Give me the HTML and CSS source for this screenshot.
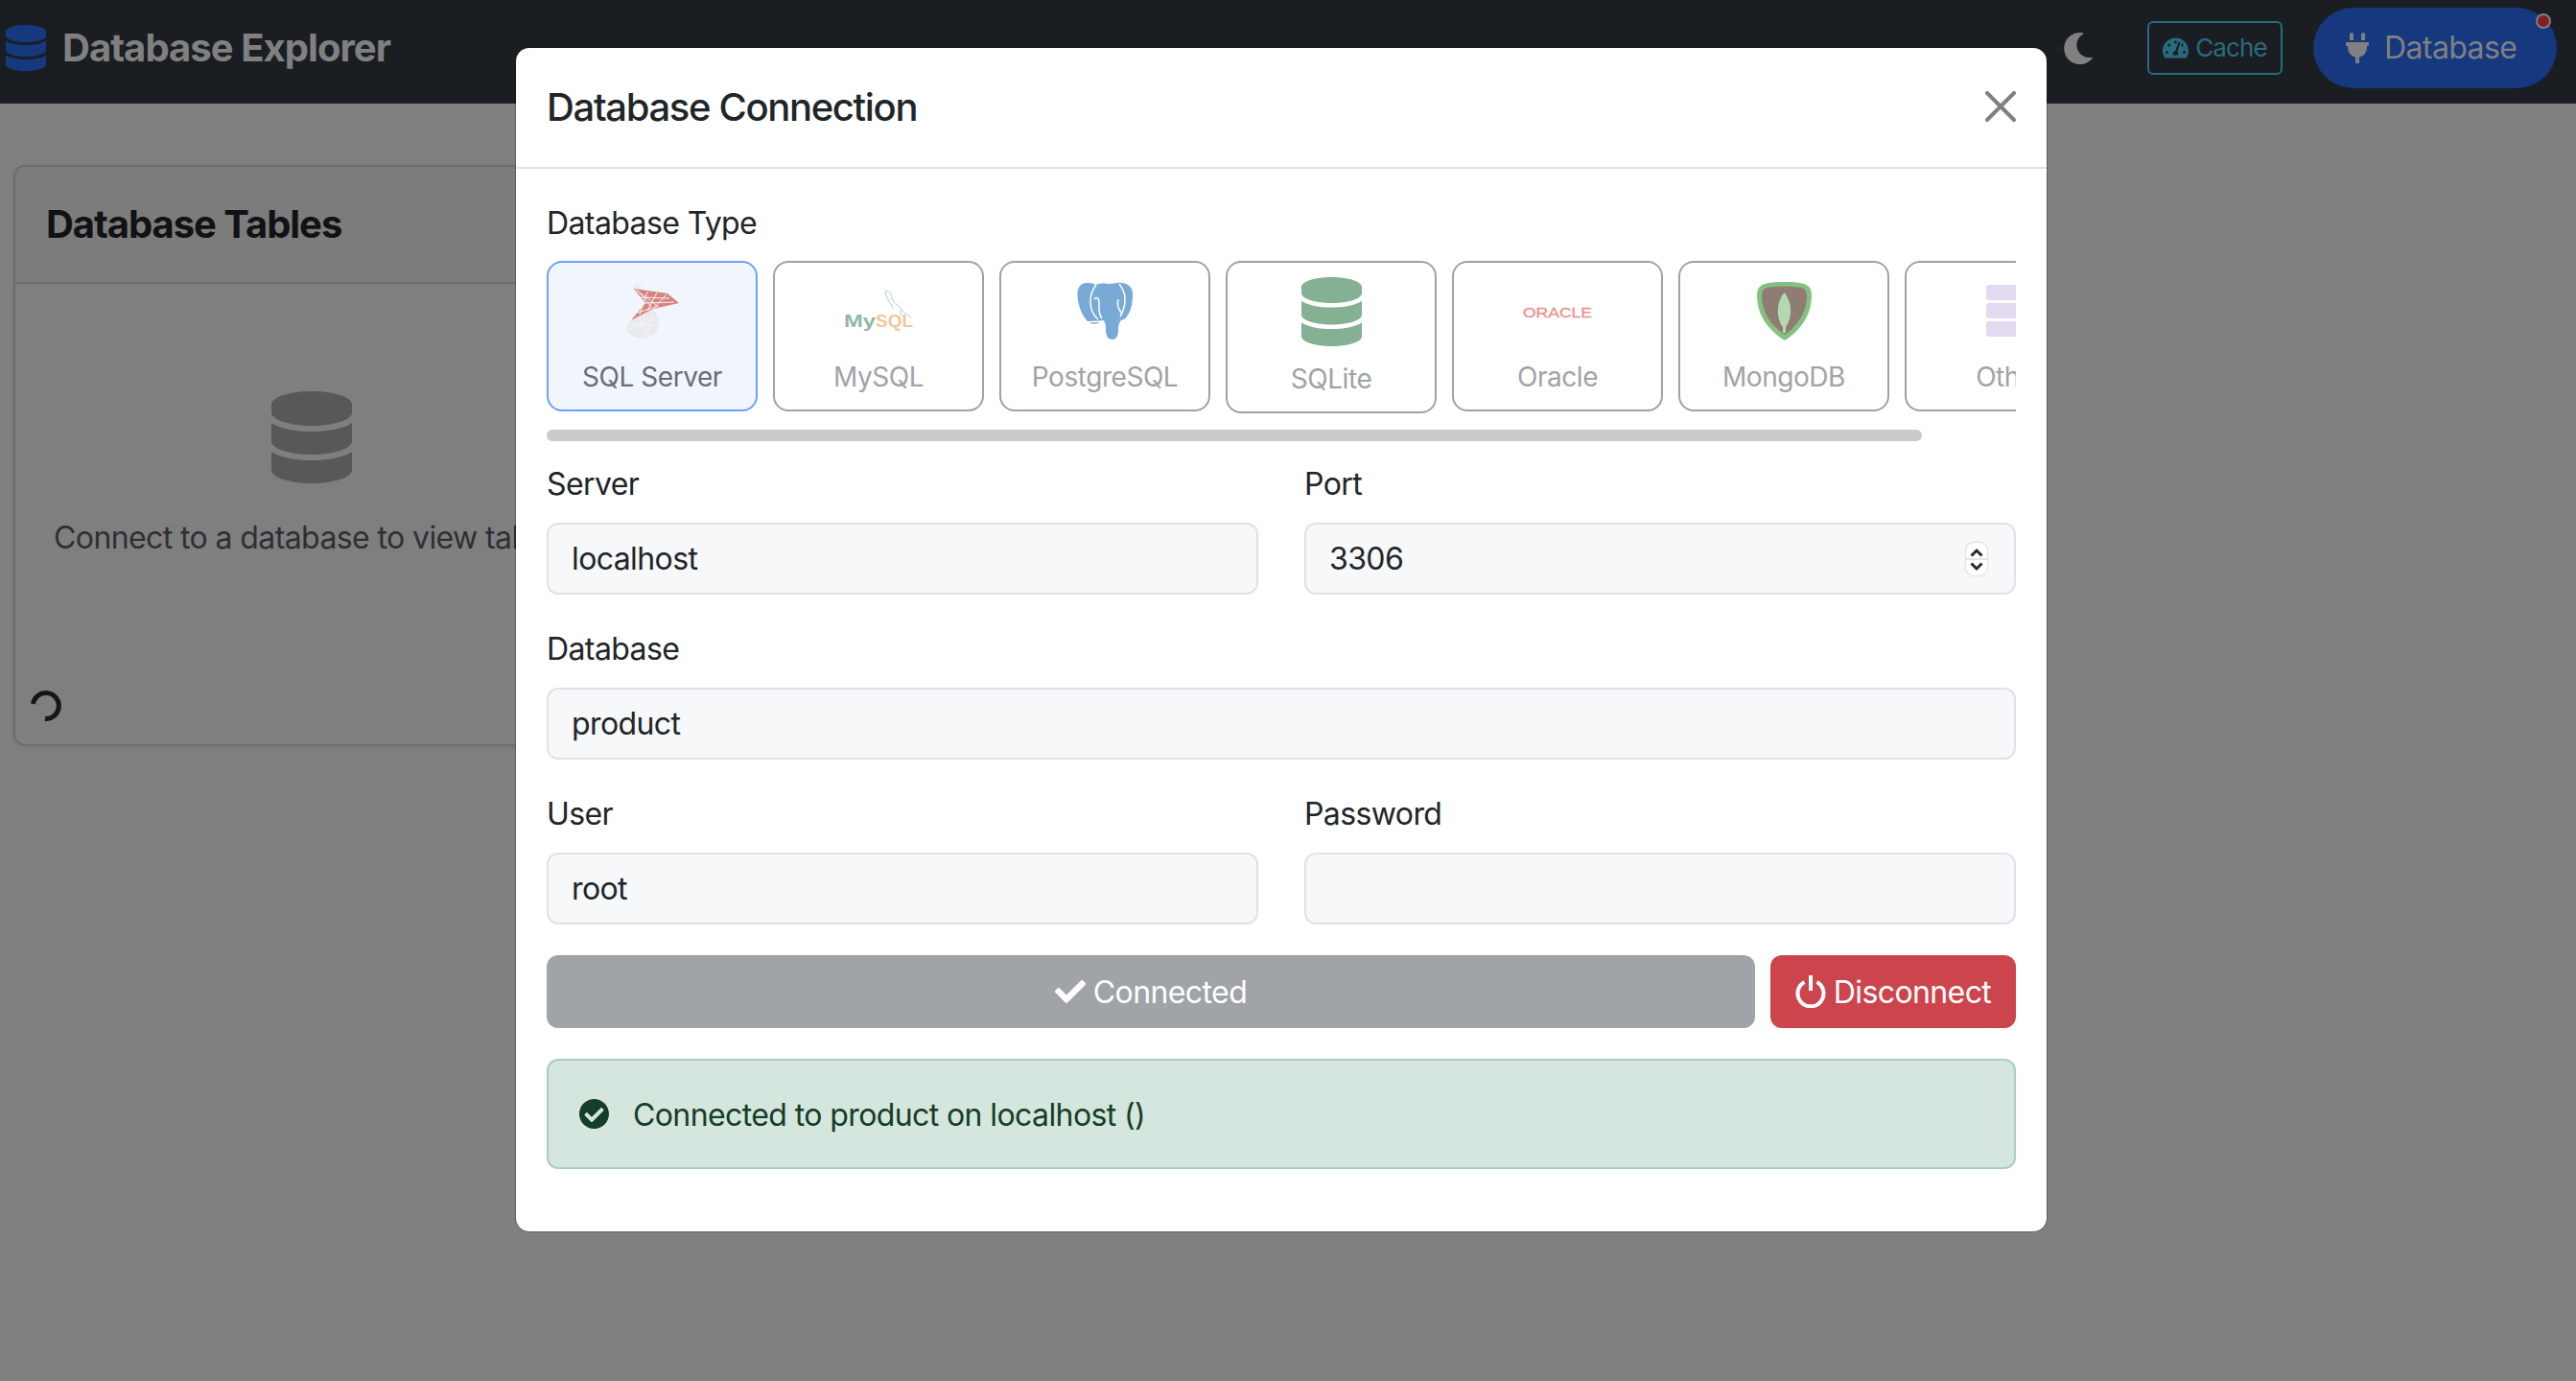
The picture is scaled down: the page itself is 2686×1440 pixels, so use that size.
FILE: index.html
```html
<!DOCTYPE html>
<html lang="en">
<head>
<meta charset="utf-8">
<title>Database Explorer</title>
<link rel="stylesheet" href="styles.css">
</head>
<body>
<nav class="navbar">
  <div class="brand">
    <svg class="brand-icon" viewBox="0 0 448 512"><path fill="currentColor" d="M448 73.143v45.714C448 159.143 347.667 192 224 192S0 159.143 0 118.857V73.143C0 32.857 100.333 0 224 0s224 32.857 224 73.143zM448 176v102.857C448 319.143 347.667 352 224 352S0 319.143 0 278.857V176c48.125 33.143 136.208 48.572 224 48.572S399.874 209.143 448 176zm0 160v102.857C448 479.143 347.667 512 224 512S0 479.143 0 438.857V336c48.125 33.143 136.208 48.572 224 48.572S399.874 369.143 448 336z"/></svg>
    <span>Database Explorer</span>
  </div>
  <div class="nav-actions">
    <svg class="moon" viewBox="27 0 460 512"><path fill="currentColor" d="M283.211 512c78.962 0 151.079-35.925 198.857-94.792 7.068-8.708-.639-21.43-11.562-19.35-124.2 23.654-238.256-71.576-238.256-196.954 0-72.222 38.662-138.635 101.498-174.394 9.686-5.512 7.25-20.197-3.756-22.23A258.156 258.156 0 0 0 283.211 0c-141.309 0-256 114.511-256 256 0 141.309 114.511 256 256 256z"/></svg>
    <button class="cache-btn">
      <svg class="gauge" viewBox="0 32 576 448"><path fill="currentColor" d="M288 32C128.94 32 0 160.94 0 320c0 52.8 14.25 102.26 39.06 144.8 5.61 9.62 16.3 15.2 27.44 15.2h443c11.14 0 21.83-5.58 27.44-15.2C561.75 422.26 576 372.8 576 320c0-159.06-128.94-288-288-288zm0 64c14.71 0 26.58 10.13 30.32 23.65-1.11 2.26-2.64 4.23-3.45 6.67l-9.22 27.67c-5.13 3.49-10.97 6.01-17.64 6.01-17.67 0-32-14.33-32-32S270.33 96 288 96zM96 384c-17.67 0-32-14.33-32-32s14.33-32 32-32 32 14.33 32 32-14.33 32-32 32zm48-160c-17.67 0-32-14.33-32-32s14.33-32 32-32 32 14.33 32 32-14.33 32-32 32zm246.77-72.41l-61.33 184C343.13 347.33 352 364.54 352 384c0 11.72-3.38 22.55-8.88 32H232.88c-5.5-9.45-8.88-20.28-8.88-32 0-33.94 26.5-61.43 59.9-63.59l61.34-184.01c4.17-12.56 17.73-19.45 30.36-15.17 12.57 4.19 19.35 17.79 15.17 30.36zm14.66 57.2l15.52-46.55c3.47-1.29 7.13-2.23 11.05-2.23 17.67 0 32 14.33 32 32s-14.33 32-32 32c-11.38-.01-20.89-6.28-26.57-15.22zM480 384c-17.67 0-32-14.33-32-32s14.33-32 32-32 32 14.33 32 32-14.33 32-32 32z"/></svg>
      <span>Cache</span>
    </button>
    <button class="db-btn">
      <svg class="plug" viewBox="0 0 384 512"><path fill="currentColor" d="M320,32a32,32,0,0,0-64,0v96h64Zm48,128H16A16,16,0,0,0,0,176v32a16,16,0,0,0,16,16H32v32A160.07,160.07,0,0,0,160,412.8V512h64V412.8A160.07,160.07,0,0,0,352,256V224h16a16,16,0,0,0,16-16V176A16,16,0,0,0,368,160ZM128,32a32,32,0,0,0-64,0v96h64Z"/></svg>
      <span>Database</span>
      <span class="status-dot"></span>
    </button>
  </div>
</nav>

<main class="main">
  <section class="card">
    <header class="card-header"><h2 class="card-title">Database Tables</h2></header>
    <div class="card-body">
      <svg class="empty-icon" viewBox="0 0 448 512"><path fill="currentColor" d="M448 73.143v45.714C448 159.143 347.667 192 224 192S0 159.143 0 118.857V73.143C0 32.857 100.333 0 224 0s224 32.857 224 73.143zM448 176v102.857C448 319.143 347.667 352 224 352S0 319.143 0 278.857V176c48.125 33.143 136.208 48.572 224 48.572S399.874 209.143 448 176zm0 160v102.857C448 479.143 347.667 512 224 512S0 479.143 0 438.857V336c48.125 33.143 136.208 48.572 224 48.572S399.874 369.143 448 336z"/></svg>
      <p class="empty-text">Connect to a database to view tables</p>
      <svg class="spinner" viewBox="0 0 32 32"><path d="M2.500 14A13.500 13.500 0 1 1 15 29.500" fill="none" stroke="currentColor" stroke-width="5"/></svg>
    </div>
  </section>
</main>

<div class="modal">
  <header class="modal-header">
    <h1 class="modal-title">Database Connection</h1>
    <svg class="close" viewBox="0 0 32 32"><path d="M2 2L30 30M30 2L2 30" stroke="currentColor" stroke-width="4" stroke-linecap="round" fill="none"/></svg>
  </header>
  <div class="modal-body">
    <label class="form-label">Database Type</label>
    <div class="types">
      <div class="type active">
        <div class="type-icon">
          <svg class="logo-sql" viewBox="0 0 58 60">
            <path d="M13 0C8 4 8 9 10 8L22 10C18 4 16 1 13 0Z" fill="#eceef0"/>
            <path d="M7 40L30 28C36 36 38 44 33 52C28 60 16 60 8 56C2 52 0 46 7 40Z" fill="#e8eaec"/>
            <path d="M10 7L45 12L57 22L30 28L7 40L22 22Z" fill="#d9837b"/>
            <path d="M14 9L28 26M24 10L16 34M34 11L24 30M44 13L31 27M18 16L47 17M20 22L52 21M14 32L36 25M12 8L33 24" stroke="#f1f5fe" stroke-width="1" fill="none"/>
            <path d="M5 44L34 46M3 50L33 38M10 56L22 36M22 58L30 34M12 42L30 57" stroke="#f1f5fe" stroke-width="1" fill="none"/>
          </svg>
        </div>
        <div class="type-label">SQL Server</div>
      </div>
      <div class="type">
        <div class="type-icon">
          <svg class="logo-mysql" viewBox="0 0 72 46">
            <path d="M43 3C48 1 49 6 50 10C52 16 58 17 60 22C62 26 68 27 70 30M43 3C44 10 48 14 51 20M58 22L60 28" stroke="#a9cdc4" stroke-width="1" fill="none"/>
            <text x="0" y="40" class="mysql-my" textLength="33" lengthAdjust="spacingAndGlyphs">My</text>
            <text x="33" y="40" class="mysql-sql" textLength="39" lengthAdjust="spacingAndGlyphs">SQL</text>
          </svg>
        </div>
        <div class="type-label">MySQL</div>
      </div>
      <div class="type">
        <div class="type-icon">
          <svg class="logo-pg" viewBox="0 0 58 61">
            <path fill="#79a9d6" d="M10 1C3 1 0 7 .5 15C1 25 6 37 12 42C16 45 22 44 27 40C30 42 30 46 30 50C30 57 33 60 37 60C41 60 43 56 43 50C43 46 44 42 46 40C50 40 54 34 56 28C58 22 58 16 58 12C58 5 52 1 46 1C42 0 38 2 32 2C27 1 22 2 19 3C16 1 13 1 10 1Z"/>
            <path fill="none" stroke="#fff" stroke-width="1.500" d="M20 3C16 8 14 14 14 20C14 28 17 35 22 39M18 18C20 15 23 17 23 21C23 27 22 33 26 38M44 2C48 7 50 12 50 18C50 25 48 31 45 36M43 18C42 22 43 28 46 32M47 40L57 39M8 42L27 41"/>
          </svg>
        </div>
        <div class="type-label">PostgreSQL</div>
      </div>
      <div class="type tall">
        <div class="type-icon">
          <svg class="logo-sqlite" viewBox="0 0 448 512"><path fill="#84b094" d="M448 73.143v45.714C448 159.143 347.667 192 224 192S0 159.143 0 118.857V73.143C0 32.857 100.333 0 224 0s224 32.857 224 73.143zM448 176v102.857C448 319.143 347.667 352 224 352S0 319.143 0 278.857V176c48.125 33.143 136.208 48.572 224 48.572S399.874 209.143 448 176zm0 160v102.857C448 479.143 347.667 512 224 512S0 479.143 0 438.857V336c48.125 33.143 136.208 48.572 224 48.572S399.874 369.143 448 336z"/></svg>
        </div>
        <div class="type-label">SQLite</div>
      </div>
      <div class="type">
        <div class="type-icon">
          <svg class="logo-oracle" viewBox="0 0 72 12"><text x="0" y="11" class="oracle-text" textLength="72" lengthAdjust="spacingAndGlyphs">ORACLE</text></svg>
        </div>
        <div class="type-label">Oracle</div>
      </div>
      <div class="type">
        <div class="type-icon">
          <svg class="logo-mongo" viewBox="0 0 57 61">
            <path fill="#85c281" d="M8 2C20 -1 37 -1 49 2C55 4 57 8 57 14C57 34 46 50 29 61C11 50 0 34 0 14C0 8 2 4 8 2Z"/>
            <path fill="#8f7d74" d="M10 6C21 4 36 4 47 6C50 7 52 10 52 15C52 32 42 46 29 55C15 46 5 32 5 15C5 10 7 7 10 6Z"/>
            <path fill="#b4d9b1" d="M28.500 11C36 20 38 36 30 47V53H27V47C19 36 21 20 28.500 11Z"/>
          </svg>
        </div>
        <div class="type-label">MongoDB</div>
      </div>
      <div class="type">
        <div class="type-icon">
          <div class="logo-other"><span></span><span></span><span></span></div>
        </div>
        <div class="type-label">Other</div>
      </div>
    </div>
    <div class="scroll-track"><div class="scroll-thumb"></div></div>

    <div class="form-row first">
      <div class="field">
        <label class="form-label">Server</label>
        <input class="form-control" type="text" value="localhost">
      </div>
      <div class="field port">
        <label class="form-label">Port</label>
        <input class="form-control" type="text" value="3306">
        <div class="stepper">
          <svg viewBox="0 0 22 34"><path d="M5.500 13.500L11 8L16.500 13.500M5.500 21.500L11 27L16.500 21.500" stroke="#2a2b2e" stroke-width="3" fill="none"/><path d="M0 17H22" stroke="#d9d9d9" stroke-width="1.400"/></svg>
        </div>
      </div>
    </div>
    <div class="form-row single">
      <div class="field">
        <label class="form-label">Database</label>
        <input class="form-control" type="text" value="product">
      </div>
    </div>
    <div class="form-row">
      <div class="field">
        <label class="form-label">User</label>
        <input class="form-control" type="text" value="root">
      </div>
      <div class="field">
        <label class="form-label">Password</label>
        <input class="form-control" type="password" value="">
      </div>
    </div>

    <div class="actions">
      <button class="btn btn-connected">
        <svg class="btn-check" viewBox="0 0 512 512"><path fill="currentColor" d="M173.898 439.404l-166.4-166.4c-9.997-9.997-9.997-26.206 0-36.204l36.203-36.204c9.997-9.998 26.207-9.998 36.204 0L192 312.69 432.095 72.596c9.997-9.997 26.207-9.997 36.204 0l36.203 36.204c9.997 9.997 9.997 26.206 0 36.204l-294.4 294.401c-9.998 9.997-26.207 9.997-36.204-.001z"/></svg>
        <span class="btn-text">Connected</span>
      </button>
      <button class="btn btn-disconnect">
        <svg class="btn-power" viewBox="0 0 32 34"><path d="M9.500 7A13.500 13.500 0 1 0 22.500 7" fill="none" stroke="currentColor" stroke-width="4"/><path d="M16 0V16" stroke="currentColor" stroke-width="4" fill="none"/></svg>
        <span class="btn-text">Disconnect</span>
      </button>
    </div>

    <div class="alert">
      <svg class="alert-icon" viewBox="8 8 496 496"><path fill="currentColor" d="M504 256c0 136.967-111.033 248-248 248S8 392.967 8 256 119.033 8 256 8s248 111.033 248 248zM227.314 387.314l184-184c6.248-6.248 6.248-16.379 0-22.627l-22.627-22.627c-6.248-6.249-16.379-6.249-22.628 0L216 308.118l-70.059-70.059c-6.248-6.248-16.379-6.248-22.628 0l-22.627 22.627c-6.248 6.248-6.248 16.379 0 22.627l104 104c6.249 6.249 16.379 6.249 22.628.001z"/></svg>
      <span class="alert-text">Connected to product on localhost ()</span>
    </div>
  </div>
</div>
</body>
</html>
```
FILE: styles.css
```css
* { box-sizing: border-box; }
html, body { margin: 0; height: 100%; overflow: hidden; }
body {
  background: #808080;
  font-family: Inter, "Liberation Sans", sans-serif;
  font-size: 32px;
  line-height: 48px;
  letter-spacing: -.6px;
  color: #212529;
}
button { font: inherit; letter-spacing: inherit; cursor: pointer; }
h1, h2, p { margin: 0; }

/* Navbar */
.navbar {
  height: 108px;
  background: #1a1e22;
  display: flex;
  align-items: center;
  justify-content: space-between;
  padding: 0 20px 8px 6px;
}
.brand {
  display: flex;
  align-items: center;
  gap: 17px;
  color: #808080;
  font-size: 40px;
  font-weight: 700;
  letter-spacing: -.95px;
  line-height: 48px;
}
.brand-icon { width: 42px; height: 48px; color: #15387f; }
.nav-actions { display: flex; align-items: center; }
.moon { width: 30px; height: 33px; color: #808080; margin-right: 57px; }
.cache-btn {
  display: flex;
  align-items: center;
  justify-content: center;
  gap: 7px;
  width: 141px;
  height: 56px;
  padding: 0;
  background: transparent;
  border: 2px solid #2a6a7e;
  border-radius: 6px;
  color: #2a6a7e;
  font-size: 26px;
  line-height: 36px;
  letter-spacing: -.9px;
  margin-right: 32px;
}
.gauge { flex: none; width: 27px; height: 22px; }
.db-btn {
  position: relative;
  display: flex;
  align-items: center;
  gap: 16px;
  width: 254px;
  height: 84px;
  padding: 0 0 0 34px;
  background: #15387f;
  border: 0;
  border-radius: 42px;
  color: #808080;
}
.plug { flex: none; width: 24px; height: 32px; }
.status-dot {
  position: absolute;
  top: 6px;
  right: 6px;
  width: 16px;
  height: 16px;
  border-radius: 50%;
  background: #7f1f28;
  border: 2px solid #808080;
}

/* Main card */
.main { padding: 64px 0 0 14px; }
.card {
  width: 622px;
  height: 606px;
  border: 2px solid #6c6c6c;
  border-radius: 12px;
  background: #7f7f7f;
  box-shadow: 0 2px 6px rgba(0, 0, 0, .08);
}
.card-header {
  height: 122px;
  padding: 0 32px;
  display: flex;
  align-items: center;
  border-bottom: 2px solid #6c6c6c;
  background: #7c7c7c;
  border-radius: 10px 10px 0 0;
}
.card-title { font-size: 40px; font-weight: 700; line-height: 48px; letter-spacing: -1.050px; color: #101214; }
.card-body {
  display: flex;
  flex-direction: column;
  align-items: center;
  padding-top: 112px;
  position: relative;
  height: 480px;
}
.empty-icon { width: 84px; height: 96px; color: #585858; }
.empty-text { margin-top: 33px; color: #2d3033; white-space: nowrap; }
.spinner {
  position: absolute;
  left: 16px;
  bottom: 24px;
  width: 32px;
  height: 32px;
  color: #141618;
}

/* Modal */
.modal {
  position: absolute;
  left: 538px;
  top: 50px;
  width: 1596px;
  height: 1234px;
  background: #fff;
  border-radius: 14px;
  box-shadow: 0 0 0 1px rgba(0, 0, 0, .25);
}
.modal-header {
  height: 126px;
  padding: 0 32px;
  display: flex;
  align-items: center;
  justify-content: space-between;
  border-bottom: 2px solid #dee2e6;
}
.modal-title { font-size: 40px; font-weight: 500; line-height: 60px; letter-spacing: -1.350px; color: #212529; }
.close { width: 32px; height: 32px; color: #808080; margin-bottom: 2px; }
.modal-body { padding: 33px 32px 0; }
.form-label { display: block; line-height: 48px; color: #212529; }

/* Type selector */
.types {
  display: flex;
  align-items: flex-start;
  gap: 16px;
  margin-top: 15px;
  height: 159px;
  overflow: hidden;
}
.type {
  flex: 0 0 220px;
  height: 157px;
  padding: 15px 0 0;
  background: #fff;
  border: 2px solid #9ea2a6;
  border-radius: 16px;
  text-align: center;
}
.type.tall { height: 159px; }
.type.active { background: #f1f5fe; border-color: #6ea0f7; }
.type-icon {
  height: 70px;
  margin-bottom: 10px;
  display: flex;
  align-items: center;
  justify-content: center;
}
.type.tall .type-icon { height: 72px; }
.type-label { color: #a0a3a8; line-height: 48px; font-size: 28px; letter-spacing: -.45px; white-space: nowrap; }
.type.active .type-label { color: #6a6d72; }
.logo-sql { width: 58px; height: 60px; }
.logo-mysql { width: 72px; height: 46px; }
.mysql-my { font: 700 18px "Liberation Sans", sans-serif; letter-spacing: 0; fill: #8fb8aa; }
.mysql-sql { font: 700 18px "Liberation Sans", sans-serif; letter-spacing: 0; fill: #f5c69a; }
.logo-pg { width: 58px; height: 61px; }
.logo-sqlite { width: 63px; height: 72px; }
.logo-oracle { width: 72px; height: 12px; margin-top: 4px; overflow: visible; }
.oracle-text { font: 400 15px "Liberation Sans", sans-serif; letter-spacing: 0; fill: #ee8e8e; stroke: #ee8e8e; stroke-width: .3px; }
.logo-mongo { width: 57px; height: 61px; }
.logo-other { width: 50px; display: flex; flex-direction: column; gap: 3px; }
.logo-other span { height: 16px; background: #e2daf0; border-radius: 3px; }

.scroll-track { margin-top: 17px; height: 12px; }
.scroll-thumb { width: 1434px; height: 12px; background: #cbcbcb; border-radius: 6px; }

/* Form */
.form-row { display: grid; grid-template-columns: 742px 742px; column-gap: 48px; margin-top: 33px; }
.form-row.first { margin-top: 21px; }
.form-row.single { grid-template-columns: 1fr; }
.field { position: relative; min-width: 0; }
.field .form-label { margin-bottom: 16px; }
.form-control {
  display: block;
  width: 100%;
  height: 75px;
  padding: 0 24px;
  background: #f7f8f9;
  border: 2px solid #dfe2e6;
  border-radius: 12px;
  font: inherit;
  letter-spacing: inherit;
  color: #212529;
  outline: none;
}
.stepper {
  position: absolute;
  right: 30px;
  bottom: 20px;
  width: 22px;
  height: 34px;
  background: #fff;
  border-radius: 8px;
  box-shadow: 0 0 2px rgba(0, 0, 0, .3);
  display: flex;
}
.stepper svg { width: 22px; height: 34px; }

/* Actions */
.actions { display: flex; gap: 16px; margin-top: 32px; }
.btn {
  display: flex;
  align-items: center;
  justify-content: center;
  height: 76px;
  border: 0;
  border-radius: 12px;
  color: #fff;
  gap: 8px;
}
.btn-text { padding-top: 2px; }
.btn-connected { flex: 1; background: #a0a3a8; }
.btn-disconnect { flex: none; width: 256px; background: #cc444c; }
.btn-check { flex: none; width: 32px; height: 32px; }
.btn-power { flex: none; width: 32px; height: 34px; }

/* Alert */
.alert {
  display: flex;
  align-items: center;
  gap: 25px;
  height: 115px;
  margin-top: 32px;
  padding: 0 32px;
  background: #d5e6de;
  border: 2px solid #a8cfbd;
  border-radius: 12px;
  color: #153d27;
}
.alert-text { padding-top: 2px; }
.alert-icon { flex: none; width: 31px; height: 31px; }
```
